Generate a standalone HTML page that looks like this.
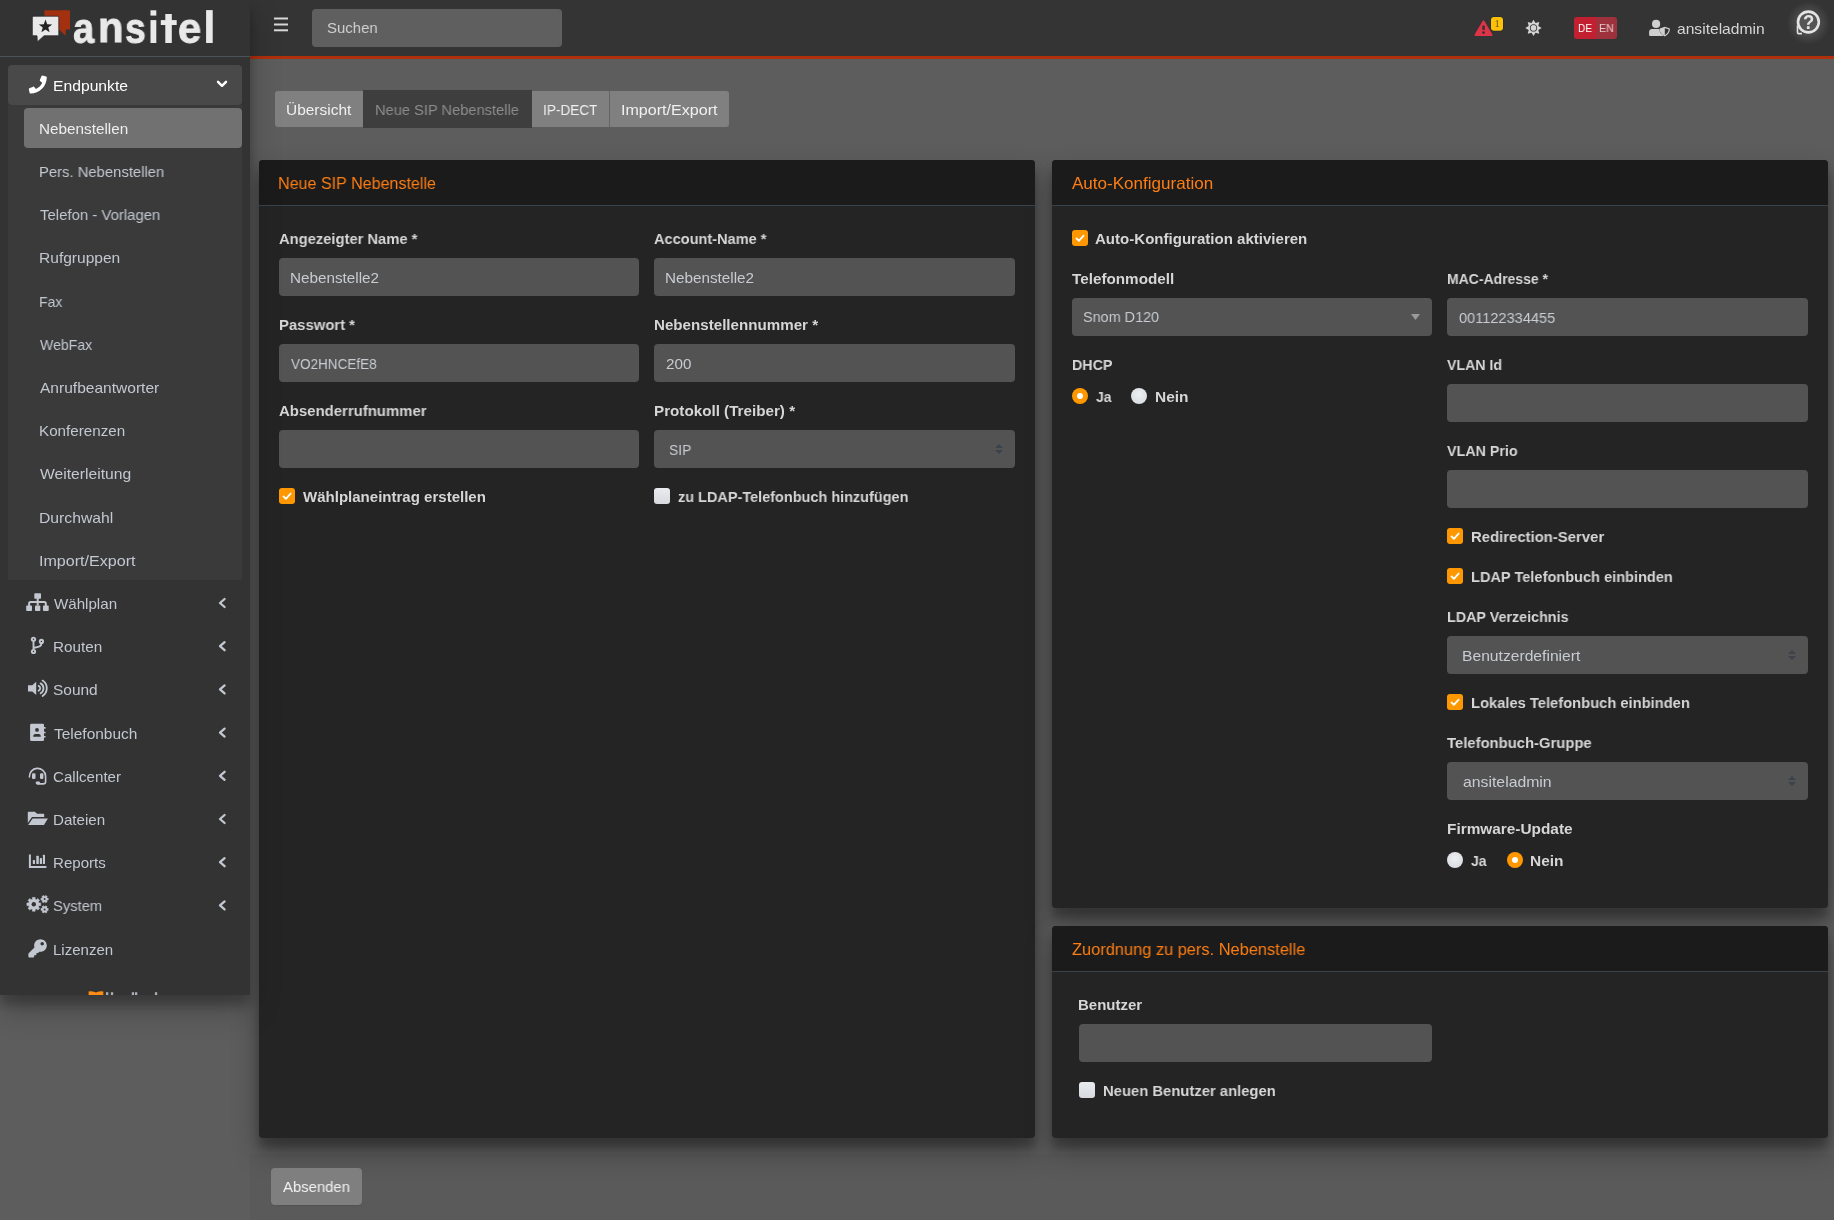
<!DOCTYPE html>
<html><head><meta charset="utf-8"><style>
html,body{margin:0;padding:0;}
body{width:1834px;height:1220px;position:relative;overflow:hidden;background:#5d5d5d;font-family:"Liberation Sans",sans-serif;}
.t{position:absolute;white-space:nowrap;line-height:1;will-change:transform;}
.b{position:absolute;}
</style></head><body>
<div class="b" style="left:250px;top:1154px;width:1584px;height:66px;background:#5a5a5a;"></div>
<div class="b" style="left:259px;top:160px;width:776px;height:978px;background:#242424;border-radius:4px;box-shadow:0 14px 28px rgba(0,0,0,.3),0 10px 10px rgba(0,0,0,.25);"></div>
<div class="b" style="left:1052px;top:160px;width:776px;height:748px;background:#242424;border-radius:4px;box-shadow:0 14px 28px rgba(0,0,0,.3),0 10px 10px rgba(0,0,0,.25);"></div>
<div class="b" style="left:1052px;top:926px;width:776px;height:212px;background:#242424;border-radius:4px;box-shadow:0 14px 28px rgba(0,0,0,.3),0 10px 10px rgba(0,0,0,.25);"></div>
<div class="b" style="left:259px;top:160px;width:776px;height:45px;background:#1b1b1b;border-radius:4px 4px 0 0;"></div>
<div class="b" style="left:259px;top:205px;width:776px;height:1px;background:#39434c;"></div>
<div class="b" style="left:1052px;top:160px;width:776px;height:45px;background:#1b1b1b;border-radius:4px 4px 0 0;"></div>
<div class="b" style="left:1052px;top:205px;width:776px;height:1px;background:#39434c;"></div>
<div class="b" style="left:1052px;top:926px;width:776px;height:45px;background:#1b1b1b;border-radius:4px 4px 0 0;"></div>
<div class="b" style="left:1052px;top:971px;width:776px;height:1px;background:#39434c;"></div>
<div class="t" style="left:277.68px;top:175.03px;font-size:16.5px;color:#fd7e14;transform:scaleX(0.9752);transform-origin:0 0;">Neue SIP Nebenstelle</div>
<div class="t" style="left:1072.00px;top:175.03px;font-size:16.5px;color:#fd7e14;transform:scaleX(1.0328);transform-origin:0 0;">Auto-Konfiguration</div>
<div class="t" style="left:1071.51px;top:941.03px;font-size:16.5px;color:#fd7e14;transform:scaleX(0.9933);transform-origin:0 0;">Zuordnung zu pers. Nebenstelle</div>
<div class="t" style="left:278.62px;top:231.30px;font-size:15px;font-weight:bold;color:#d6d6d6;transform:scaleX(0.9824);transform-origin:0 0;">Angezeigter Name *</div>
<div class="t" style="left:653.62px;top:231.30px;font-size:15px;font-weight:bold;color:#d6d6d6;transform:scaleX(0.9703);transform-origin:0 0;">Account-Name *</div>
<div class="b" style="left:279px;top:258px;width:360px;height:38px;background:#535353;border-radius:4px;"></div>
<div class="b" style="left:654px;top:258px;width:361px;height:38px;background:#535353;border-radius:4px;"></div>
<div class="t" style="left:289.80px;top:270.30px;font-size:15px;color:#c8ccd1;transform:scaleX(1.0167);transform-origin:0 0;">Nebenstelle2</div>
<div class="t" style="left:664.80px;top:270.30px;font-size:15px;color:#c8ccd1;transform:scaleX(1.0167);transform-origin:0 0;">Nebenstelle2</div>
<div class="t" style="left:278.82px;top:317.30px;font-size:15px;font-weight:bold;color:#d6d6d6;transform:scaleX(0.9911);transform-origin:0 0;">Passwort *</div>
<div class="t" style="left:653.82px;top:317.30px;font-size:15px;font-weight:bold;color:#d6d6d6;transform:scaleX(1.0094);transform-origin:0 0;">Nebenstellennummer *</div>
<div class="b" style="left:279px;top:344px;width:360px;height:38px;background:#535353;border-radius:4px;"></div>
<div class="b" style="left:654px;top:344px;width:361px;height:38px;background:#535353;border-radius:4px;"></div>
<div class="t" style="left:290.93px;top:356.30px;font-size:15px;color:#c8ccd1;transform:scaleX(0.9009);transform-origin:0 0;">VO2HNCEfE8</div>
<div class="t" style="left:666.25px;top:356.30px;font-size:15px;color:#c8ccd1;transform:scaleX(1.0127);transform-origin:0 0;">200</div>
<div class="t" style="left:278.62px;top:403.30px;font-size:15px;font-weight:bold;color:#d6d6d6;transform:scaleX(0.9949);transform-origin:0 0;">Absenderrufnummer</div>
<div class="t" style="left:653.82px;top:403.30px;font-size:15px;font-weight:bold;color:#d6d6d6;transform:scaleX(1.0134);transform-origin:0 0;">Protokoll (Treiber) *</div>
<div class="b" style="left:279px;top:430px;width:360px;height:38px;background:#535353;border-radius:4px;"></div>
<div class="b" style="left:654px;top:430px;width:361px;height:38px;background:#535353;border-radius:4px;"></div>
<div class="t" style="left:669.33px;top:442.30px;font-size:15px;color:#c8ccd1;transform:scaleX(0.9241);transform-origin:0 0;">SIP</div>
<svg class="b" style="left:995px;top:444px" width="8" height="10" viewBox="0 0 8 10"><path d="M0 4 L4 0 L8 4Z M0 6 L4 10 L8 6Z" fill="#3b424a"/></svg>
<div class="b" style="left:279px;top:488px;width:16px;height:16px;border-radius:3px;background:#ff9800"><svg width="16" height="16" viewBox="0 0 16 16" style="position:absolute;left:0;top:0"><path d="M4.5 8.4 L6.9 10.8 L11.6 5.6" fill="none" stroke="#fff" stroke-width="1.8" stroke-linecap="round" stroke-linejoin="round"/></svg></div>
<div class="t" style="left:302.50px;top:489.30px;font-size:15px;font-weight:bold;color:#d6d6d6;transform:scaleX(1.0019);transform-origin:0 0;">Wählplaneintrag erstellen</div>
<div class="b" style="left:654px;top:488px;width:16px;height:16px;border-radius:3px;background:linear-gradient(#e9ecef,#d6dadf)"></div>
<div class="t" style="left:678.20px;top:489.30px;font-size:15px;font-weight:bold;color:#d6d6d6;transform:scaleX(0.9647);transform-origin:0 0;">zu LDAP-Telefonbuch hinzufügen</div>
<div class="b" style="left:1072px;top:230px;width:16px;height:16px;border-radius:3px;background:#ff9800"><svg width="16" height="16" viewBox="0 0 16 16" style="position:absolute;left:0;top:0"><path d="M4.5 8.4 L6.9 10.8 L11.6 5.6" fill="none" stroke="#fff" stroke-width="1.8" stroke-linecap="round" stroke-linejoin="round"/></svg></div>
<div class="t" style="left:1095.12px;top:231.30px;font-size:15px;font-weight:bold;color:#d6d6d6;transform:scaleX(1.0030);transform-origin:0 0;">Auto-Konfiguration aktivieren</div>
<div class="t" style="left:1071.85px;top:271.30px;font-size:15px;font-weight:bold;color:#d6d6d6;transform:scaleX(1.0164);transform-origin:0 0;">Telefonmodell</div>
<div class="t" style="left:1446.83px;top:271.30px;font-size:15px;font-weight:bold;color:#d6d6d6;transform:scaleX(0.9317);transform-origin:0 0;">MAC-Adresse *</div>
<div class="b" style="left:1072px;top:298px;width:360px;height:38px;background:#535353;border-radius:4px;"></div>
<div class="b" style="left:1447px;top:298px;width:361px;height:38px;background:#535353;border-radius:4px;"></div>
<div class="t" style="left:1083.33px;top:309.30px;font-size:15px;color:#c8ccd1;transform:scaleX(0.9615);transform-origin:0 0;">Snom D120</div>
<svg class="b" style="left:1411px;top:314px" width="9" height="6" viewBox="0 0 9 6"><path d="M0 0 L9 0 L4.5 6Z" fill="#9a9a9a"/></svg>
<div class="t" style="left:1459.40px;top:310.30px;font-size:15px;color:#c8ccd1;transform:scaleX(0.9714);transform-origin:0 0;">001122334455</div>
<div class="t" style="left:1071.83px;top:357.30px;font-size:15px;font-weight:bold;color:#d6d6d6;transform:scaleX(0.9506);transform-origin:0 0;">DHCP</div>
<div class="t" style="left:1446.92px;top:357.30px;font-size:15px;font-weight:bold;color:#d6d6d6;transform:scaleX(0.9424);transform-origin:0 0;">VLAN Id</div>
<div class="b" style="left:1447px;top:384px;width:361px;height:38px;background:#535353;border-radius:4px;"></div>
<div class="b" style="left:1072px;top:388px;width:16px;height:16px;border-radius:50%;background:#ff9800"><div class="b" style="left:5px;top:5px;width:6px;height:6px;border-radius:50%;background:#fff"></div></div>
<div class="t" style="left:1095.78px;top:389.30px;font-size:15px;font-weight:bold;color:#d6d6d6;transform:scaleX(0.9351);transform-origin:0 0;">Ja</div>
<div class="b" style="left:1131px;top:388px;width:16px;height:16px;border-radius:50%;background:radial-gradient(circle at 50% 40%,#eef0f2,#d3d7dc)"></div>
<div class="t" style="left:1154.53px;top:389.30px;font-size:15px;font-weight:bold;color:#d6d6d6;transform:scaleX(1.0294);transform-origin:0 0;">Nein</div>
<div class="t" style="left:1446.92px;top:443.30px;font-size:15px;font-weight:bold;color:#d6d6d6;transform:scaleX(0.9524);transform-origin:0 0;">VLAN Prio</div>
<div class="b" style="left:1447px;top:470px;width:361px;height:38px;background:#535353;border-radius:4px;"></div>
<div class="b" style="left:1447px;top:528px;width:16px;height:16px;border-radius:3px;background:#ff9800"><svg width="16" height="16" viewBox="0 0 16 16" style="position:absolute;left:0;top:0"><path d="M4.5 8.4 L6.9 10.8 L11.6 5.6" fill="none" stroke="#fff" stroke-width="1.8" stroke-linecap="round" stroke-linejoin="round"/></svg></div>
<div class="t" style="left:1470.53px;top:529.30px;font-size:15px;font-weight:bold;color:#d6d6d6;transform:scaleX(0.9921);transform-origin:0 0;">Redirection-Server</div>
<div class="b" style="left:1447px;top:568px;width:16px;height:16px;border-radius:3px;background:#ff9800"><svg width="16" height="16" viewBox="0 0 16 16" style="position:absolute;left:0;top:0"><path d="M4.5 8.4 L6.9 10.8 L11.6 5.6" fill="none" stroke="#fff" stroke-width="1.8" stroke-linecap="round" stroke-linejoin="round"/></svg></div>
<div class="t" style="left:1470.53px;top:569.30px;font-size:15px;font-weight:bold;color:#d6d6d6;transform:scaleX(0.9715);transform-origin:0 0;">LDAP Telefonbuch einbinden</div>
<div class="t" style="left:1446.83px;top:609.30px;font-size:15px;font-weight:bold;color:#d6d6d6;transform:scaleX(0.9547);transform-origin:0 0;">LDAP Verzeichnis</div>
<div class="b" style="left:1447px;top:636px;width:361px;height:38px;background:#535353;border-radius:4px;"></div>
<div class="t" style="left:1462.20px;top:648.30px;font-size:15px;color:#c8ccd1;transform:scaleX(1.0435);transform-origin:0 0;">Benutzerdefiniert</div>
<svg class="b" style="left:1788px;top:650px" width="8" height="10" viewBox="0 0 8 10"><path d="M0 4 L4 0 L8 4Z M0 6 L4 10 L8 6Z" fill="#3b424a"/></svg>
<div class="b" style="left:1447px;top:694px;width:16px;height:16px;border-radius:3px;background:#ff9800"><svg width="16" height="16" viewBox="0 0 16 16" style="position:absolute;left:0;top:0"><path d="M4.5 8.4 L6.9 10.8 L11.6 5.6" fill="none" stroke="#fff" stroke-width="1.8" stroke-linecap="round" stroke-linejoin="round"/></svg></div>
<div class="t" style="left:1470.53px;top:695.30px;font-size:15px;font-weight:bold;color:#d6d6d6;transform:scaleX(0.9811);transform-origin:0 0;">Lokales Telefonbuch einbinden</div>
<div class="t" style="left:1446.85px;top:735.30px;font-size:15px;font-weight:bold;color:#d6d6d6;transform:scaleX(0.9882);transform-origin:0 0;">Telefonbuch-Gruppe</div>
<div class="b" style="left:1447px;top:762px;width:361px;height:38px;background:#535353;border-radius:4px;"></div>
<div class="t" style="left:1462.80px;top:774.30px;font-size:15px;color:#c8ccd1;transform:scaleX(1.0526);transform-origin:0 0;">ansiteladmin</div>
<svg class="b" style="left:1788px;top:776px" width="8" height="10" viewBox="0 0 8 10"><path d="M0 4 L4 0 L8 4Z M0 6 L4 10 L8 6Z" fill="#3b424a"/></svg>
<div class="t" style="left:1446.83px;top:821.30px;font-size:15px;font-weight:bold;color:#d6d6d6;transform:scaleX(1.0250);transform-origin:0 0;">Firmware-Update</div>
<div class="b" style="left:1447px;top:852px;width:16px;height:16px;border-radius:50%;background:radial-gradient(circle at 50% 40%,#eef0f2,#d3d7dc)"></div>
<div class="t" style="left:1471.28px;top:853.30px;font-size:15px;font-weight:bold;color:#d6d6d6;transform:scaleX(0.9351);transform-origin:0 0;">Ja</div>
<div class="b" style="left:1507px;top:852px;width:16px;height:16px;border-radius:50%;background:#ff9800"><div class="b" style="left:5px;top:5px;width:6px;height:6px;border-radius:50%;background:#fff"></div></div>
<div class="t" style="left:1530.43px;top:853.30px;font-size:15px;font-weight:bold;color:#d6d6d6;transform:scaleX(1.0294);transform-origin:0 0;">Nein</div>
<div class="t" style="left:1078.43px;top:997.30px;font-size:15px;font-weight:bold;color:#d6d6d6;transform:scaleX(1.0000);transform-origin:0 0;">Benutzer</div>
<div class="b" style="left:1079px;top:1024px;width:353px;height:38px;background:#535353;border-radius:4px;"></div>
<div class="b" style="left:1079px;top:1082px;width:16px;height:16px;border-radius:3px;background:linear-gradient(#e9ecef,#d6dadf)"></div>
<div class="t" style="left:1103.23px;top:1083.30px;font-size:15px;font-weight:bold;color:#d6d6d6;transform:scaleX(0.9874);transform-origin:0 0;">Neuen Benutzer anlegen</div>
<div class="b" style="left:271px;top:1168px;width:91px;height:37px;background:#7f7f7f;border-radius:4px;box-shadow:0 1px 1px rgba(0,0,0,.08);"></div>
<div class="t" style="left:283.00px;top:1179.30px;font-size:15px;color:#f2f2f2;transform:scaleX(0.9910);transform-origin:0 0;">Absenden</div>
<div class="b" style="left:275px;top:91px;width:88px;height:36px;background:#808080;border-radius:3px 0 0 3px;"></div>
<div class="b" style="left:363px;top:90px;width:169px;height:38px;background:#3e3e3e;"></div>
<div class="b" style="left:532px;top:91px;width:77px;height:36px;background:#808080;"></div>
<div class="b" style="left:609px;top:91px;width:1px;height:36px;background:#646464;"></div>
<div class="b" style="left:610px;top:91px;width:119px;height:36px;background:#808080;border-radius:0 3px 3px 0;"></div>
<div class="t" style="left:285.88px;top:102.30px;font-size:15px;color:#f0f0f0;transform:scaleX(1.0306);transform-origin:0 0;">Übersicht</div>
<div class="t" style="left:374.80px;top:102.30px;font-size:15px;color:#8c8c8c;transform:scaleX(0.9764);transform-origin:0 0;">Neue SIP Nebenstelle</div>
<div class="t" style="left:542.65px;top:102.30px;font-size:15px;color:#f0f0f0;transform:scaleX(0.9083);transform-origin:0 0;">IP-DECT</div>
<div class="t" style="left:620.65px;top:102.30px;font-size:15px;color:#f0f0f0;transform:scaleX(1.0725);transform-origin:0 0;">Import/Export</div>
<div class="b" style="left:250px;top:0px;width:1584px;height:56px;background:#343434;"></div>
<div class="b" style="left:250px;top:56px;width:1584px;height:3px;background:#b0300b;"></div>
<div class="b" style="left:312px;top:9px;width:250px;height:38px;background:#5f5f5f;border-radius:4px;"></div>
<div class="t" style="left:327.02px;top:20.30px;font-size:15px;color:#d0d0d0;transform:scaleX(0.9959);transform-origin:0 0;">Suchen</div>
<div class="t" style="left:1677.20px;top:21.30px;font-size:15px;color:#d6d6d6;transform:scaleX(1.0405);transform-origin:0 0;">ansiteladmin</div>
<div class="b" style="left:1574px;top:17px;width:22px;height:22px;background:#c21f30;border-radius:3px 0 0 3px;"></div>
<div class="b" style="left:1596px;top:17px;width:21px;height:22px;background:#9d323c;border-radius:0 3px 3px 0;"></div>
<div class="t" style="left:1577.80px;top:22.83px;font-size:11.3px;color:#ffffff;transform:scaleX(0.8954);transform-origin:0 0;">DE</div>
<div class="t" style="left:1598.60px;top:22.83px;font-size:11.3px;color:#e6c9cc;transform:scaleX(0.9464);transform-origin:0 0;">EN</div>
<div class="b" style="left:0px;top:0px;width:250px;height:995px;background:#333333;box-shadow:0 14px 28px rgba(0,0,0,.25),0 10px 10px rgba(0,0,0,.22);"></div>
<div class="b" style="left:0px;top:56px;width:250px;height:1px;background:#4b545c;"></div>
<div class="b" style="left:8px;top:105px;width:234px;height:475px;background:#3a3a3a;"></div>
<div class="b" style="left:8px;top:65px;width:234px;height:40px;background:#494949;border-radius:4px;"></div>
<div class="b" style="left:24px;top:108px;width:218px;height:40px;background:#717171;border-radius:4px;"></div>
<div class="t" style="left:52.80px;top:78.30px;font-size:15px;color:#ffffff;transform:scaleX(1.0455);transform-origin:0 0;">Endpunkte</div>
<div class="t" style="left:39.10px;top:121.30px;font-size:15px;color:#eeeeee;transform:scaleX(1.0193);transform-origin:0 0;">Nebenstellen</div>
<div class="t" style="left:39.10px;top:164.30px;font-size:15px;color:#c2c7d0;transform:scaleX(0.9874);transform-origin:0 0;">Pers. Nebenstellen</div>
<div class="t" style="left:40.00px;top:207.30px;font-size:15px;color:#c2c7d0;transform:scaleX(0.9948);transform-origin:0 0;">Telefon - Vorlagen</div>
<div class="t" style="left:39.10px;top:250.30px;font-size:15px;color:#c2c7d0;transform:scaleX(1.0367);transform-origin:0 0;">Rufgruppen</div>
<div class="t" style="left:39.10px;top:294.30px;font-size:15px;color:#c2c7d0;transform:scaleX(0.9312);transform-origin:0 0;">Fax</div>
<div class="t" style="left:40.22px;top:337.30px;font-size:15px;color:#c2c7d0;transform:scaleX(0.9395);transform-origin:0 0;">WebFax</div>
<div class="t" style="left:40.30px;top:380.30px;font-size:15px;color:#c2c7d0;transform:scaleX(1.0364);transform-origin:0 0;">Anrufbeantworter</div>
<div class="t" style="left:39.10px;top:423.30px;font-size:15px;color:#c2c7d0;transform:scaleX(1.0136);transform-origin:0 0;">Konferenzen</div>
<div class="t" style="left:40.22px;top:466.30px;font-size:15px;color:#c2c7d0;transform:scaleX(1.0444);transform-origin:0 0;">Weiterleitung</div>
<div class="t" style="left:39.10px;top:510.30px;font-size:15px;color:#c2c7d0;transform:scaleX(1.0492);transform-origin:0 0;">Durchwahl</div>
<div class="t" style="left:38.95px;top:553.30px;font-size:15px;color:#c2c7d0;transform:scaleX(1.0725);transform-origin:0 0;">Import/Export</div>
<div class="t" style="left:53.92px;top:596.30px;font-size:15px;color:#c2c7d0;transform:scaleX(1.0081);transform-origin:0 0;">Wählplan</div>
<div class="t" style="left:52.80px;top:639.30px;font-size:15px;color:#c2c7d0;transform:scaleX(1.0173);transform-origin:0 0;">Routen</div>
<div class="t" style="left:53.33px;top:682.30px;font-size:15px;color:#c2c7d0;transform:scaleX(1.0312);transform-origin:0 0;">Sound</div>
<div class="t" style="left:53.70px;top:726.30px;font-size:15px;color:#c2c7d0;transform:scaleX(1.0305);transform-origin:0 0;">Telefonbuch</div>
<div class="t" style="left:53.25px;top:769.30px;font-size:15px;color:#c2c7d0;transform:scaleX(1.0071);transform-origin:0 0;">Callcenter</div>
<div class="t" style="left:52.80px;top:812.30px;font-size:15px;color:#c2c7d0;transform:scaleX(1.0101);transform-origin:0 0;">Dateien</div>
<div class="t" style="left:52.80px;top:855.30px;font-size:15px;color:#c2c7d0;transform:scaleX(1.0044);transform-origin:0 0;">Reports</div>
<div class="t" style="left:53.33px;top:898.30px;font-size:15px;color:#c2c7d0;transform:scaleX(0.9819);transform-origin:0 0;">System</div>
<div class="t" style="left:52.80px;top:942.30px;font-size:15px;color:#c2c7d0;transform:scaleX(1.0030);transform-origin:0 0;">Lizenzen</div>
<div class="t" style="left:72.56px;top:6.79px;font-size:42.73px;font-weight:bold;color:#e9e9e9;transform:scaleX(0.8924);transform-origin:0 0;-webkit-text-stroke:0.9px #e9e9e9;">a</div>
<div class="t" style="left:98.19px;top:6.89px;font-size:42.41px;font-weight:bold;color:#e9e9e9;transform:scaleX(0.9821);transform-origin:0 0;-webkit-text-stroke:0.9px #e9e9e9;">n</div>
<div class="t" style="left:125.49px;top:6.79px;font-size:42.73px;font-weight:bold;color:#e9e9e9;transform:scaleX(0.8777);transform-origin:0 0;-webkit-text-stroke:0.9px #e9e9e9;">s</div>
<div class="t" style="left:178.33px;top:6.79px;font-size:42.73px;font-weight:bold;color:#e9e9e9;transform:scaleX(0.9752);transform-origin:0 0;-webkit-text-stroke:0.9px #e9e9e9;">e</div>
<svg class="b" style="left:0;top:0" width="1834" height="1220" viewBox="0 0 1834 1220"><rect x="274" y="17.5" width="14" height="2" fill="#d8d8d8"/>
<rect x="274" y="23.5" width="14" height="2" fill="#d8d8d8"/>
<rect x="274" y="29.3" width="14" height="2" fill="#d8d8d8"/>
<path d="M44.4 10.3 H69 Q70 10.3 70 11.3 V29.6 H65.7 V35.7 L59.5 29.9 H44.4 Z" fill="#a3300f"/>
<path d="M33.8 16.2 H57.3 Q58.8 16.2 58.8 17.7 V34.3 Q58.8 35.8 57.3 35.8 H44.1 L37.3 41.9 L37 35.8 H33.8 Q32.3 35.8 32.3 34.3 V17.7 Q32.3 16.2 33.8 16.2Z" fill="#e9e9e9" stroke="#2a2a2a" stroke-width="0.8"/>
<path d="M45.50 19.60 L47.20 24.25 L52.16 24.44 L48.26 27.50 L49.61 32.26 L45.50 29.50 L41.39 32.26 L42.74 27.50 L38.84 24.44 L43.80 24.25Z" fill="#232323"/>
<rect x="150.5" y="20.1" width="5.8" height="22.9" fill="#e9e9e9"/><rect x="150.5" y="10.3" width="5.8" height="5.3" fill="#e9e9e9"/>
<rect x="165.3" y="14" width="6.5" height="29" fill="#e9e9e9"/><rect x="160.8" y="20.1" width="15.9" height="4.9" fill="#e9e9e9"/>
<rect x="206.1" y="10.1" width="6.6" height="32.9" fill="#e9e9e9"/>
<g transform="translate(28.8 75.6) scale(0.03516)"><path d="M493.4 24.6l-104-24c-11.3-2.6-22.9 3.3-27.5 13.9l-48 112c-4.2 9.8-1.4 21.3 6.9 28l60.6 49.6c-36 76.7-98.9 140.5-177.2 177.2l-49.6-60.6c-6.8-8.3-18.2-11.1-28-6.9l-112 48C3.9 366.5-2 378.1.6 389.4l24 104C27.1 504.2 36.7 512 48 512c256.1 0 464-207.5 464-464 0-11.2-7.7-20.9-18.6-23.4z" fill="#ffffff"/></g>
<path d="M218 81.8 L222 85.8 L226 81.8" fill="none" stroke="#ffffff" stroke-width="2.4" stroke-linecap="round" stroke-linejoin="round"/>
<path d="M224.6 599.0 L220 603.0 L224.6 607.0" fill="none" stroke="#c2c7d0" stroke-width="2.3" stroke-linecap="round" stroke-linejoin="round"/>
<path d="M224.6 642.2 L220 646.2 L224.6 650.2" fill="none" stroke="#c2c7d0" stroke-width="2.3" stroke-linecap="round" stroke-linejoin="round"/>
<path d="M224.6 685.4 L220 689.4 L224.6 693.4" fill="none" stroke="#c2c7d0" stroke-width="2.3" stroke-linecap="round" stroke-linejoin="round"/>
<path d="M224.6 728.6 L220 732.6 L224.6 736.6" fill="none" stroke="#c2c7d0" stroke-width="2.3" stroke-linecap="round" stroke-linejoin="round"/>
<path d="M224.6 771.8 L220 775.8 L224.6 779.8" fill="none" stroke="#c2c7d0" stroke-width="2.3" stroke-linecap="round" stroke-linejoin="round"/>
<path d="M224.6 815.0 L220 819.0 L224.6 823.0" fill="none" stroke="#c2c7d0" stroke-width="2.3" stroke-linecap="round" stroke-linejoin="round"/>
<path d="M224.6 858.2 L220 862.2 L224.6 866.2" fill="none" stroke="#c2c7d0" stroke-width="2.3" stroke-linecap="round" stroke-linejoin="round"/>
<path d="M224.6 901.4 L220 905.4 L224.6 909.4" fill="none" stroke="#c2c7d0" stroke-width="2.3" stroke-linecap="round" stroke-linejoin="round"/>
<g fill="#c2c7d0"><rect x="34.3" y="593.3" width="6.7" height="5.5" rx="0.8"/><rect x="36.7" y="598" width="2" height="7.5"/><rect x="26.2" y="605.4" width="5.8" height="5.6" rx="0.8"/><rect x="35" y="605.4" width="5.3" height="5.6" rx="0.8"/><rect x="43" y="605.4" width="5.7" height="5.6" rx="0.8"/></g><path d="M29.1 606 V603.6 Q29.1 602.1 30.6 602.1 H44.3 Q45.8 602.1 45.8 603.6 V606" fill="none" stroke="#c2c7d0" stroke-width="2"/>
<g fill="none" stroke="#c2c7d0" stroke-width="1.9"><path d="M33.5 641.5 V649.5"/><path d="M41.4 643.6 Q41.4 647.3 34 647.7"/></g><g fill="#c2c7d0"><circle cx="33.5" cy="639.3" r="2.6"/><circle cx="41.4" cy="641.4" r="2.6"/><circle cx="33.5" cy="651.5" r="2.6"/></g><g fill="#333"><circle cx="33.5" cy="639.3" r="0.7"/><circle cx="41.4" cy="641.4" r="0.7"/><circle cx="33.5" cy="651.5" r="0.7"/></g>
<path d="M28 685.2 H32.3 L36.2 681.8 V695 L32.3 691.5 H28Z" fill="#c2c7d0"/><g fill="none" stroke="#c2c7d0" stroke-width="1.8" stroke-linecap="round"><path d="M38.6 685.9 A2.6 2.6 0 0 1 38.6 690.7"/><path d="M40.6 683.4 A5.6 5.6 0 0 1 40.6 693.2"/><path d="M42.6 680.6 A9.2 9.2 0 0 1 42.6 696"/></g>
<rect x="30.1" y="723.7" width="13.9" height="17.3" rx="1.3" fill="#c2c7d0"/><g fill="#c2c7d0"><rect x="43.5" y="727.1" width="2.1" height="1.6" rx="0.5"/><rect x="43.5" y="731.7" width="2.1" height="1.6" rx="0.5"/><rect x="43.5" y="736" width="2.1" height="1.6" rx="0.5"/></g><circle cx="37" cy="729.9" r="1.9" fill="#333"/><path d="M33.2 736.7 Q33.2 734 35.5 734 H38.5 Q40.8 734 40.8 736.7Z" fill="#333"/>
<path d="M29.4 777 A8.1 8.1 0 0 1 45.6 776 V781.5 Q45.6 783.9 43.2 783.9 H37.5" fill="none" stroke="#c2c7d0" stroke-width="1.6" stroke-linecap="round"/><g fill="#c2c7d0"><rect x="32" y="773.2" width="3.5" height="5.7" rx="1.2"/><rect x="40" y="773.2" width="3.4" height="5.7" rx="1.2"/><rect x="35.7" y="781.6" width="4.3" height="2.7" rx="1.2"/></g>
<path d="M28.6 811.7 H34.8 L37.1 813.8 H43.4 Q44.2 813.8 44.2 814.6 V817 H32 L27.8 823 V812.5 Q27.8 811.7 28.6 811.7Z" fill="#c2c7d0"/><path d="M32.6 818.4 H47.9 L44 824.9 H28.1Z" fill="#c2c7d0"/>
<g fill="#c2c7d0"><path d="M28.9 854.6 H30.9 V866 H46.4 V867.9 H28.9Z"/><rect x="32.8" y="860" width="2.2" height="3.9" rx="0.5"/><rect x="36.3" y="855.8" width="2.5" height="8.1" rx="0.5"/><rect x="39.8" y="858" width="2.2" height="5.9" rx="0.5"/><rect x="42.9" y="854.7" width="2.1" height="9.2" rx="0.5"/></g>
<path d="M38.70 902.27 L38.97 903.11 L40.67 902.93 L40.67 905.67 L38.97 905.49 L38.70 906.33 L38.29 907.11 L39.62 908.19 L37.69 910.12 L36.61 908.79 L35.83 909.20 L34.99 909.47 L35.17 911.17 L32.43 911.17 L32.61 909.47 L31.77 909.20 L30.99 908.79 L29.91 910.12 L27.98 908.19 L29.31 907.11 L28.90 906.33 L28.63 905.49 L26.93 905.67 L26.93 902.93 L28.63 903.11 L28.90 902.27 L29.31 901.49 L27.98 900.41 L29.91 898.48 L30.99 899.81 L31.77 899.40 L32.61 899.13 L32.43 897.43 L35.17 897.43 L34.99 899.13 L35.83 899.40 L36.61 899.81 L37.69 898.48 L39.62 900.41 L38.29 901.49Z" fill="#c2c7d0" stroke="#c2c7d0" stroke-width="0.6" stroke-linejoin="round"/><circle cx="33.8" cy="904.3" r="2.2" fill="#333333"/>
<path d="M46.94 897.75 L47.18 898.30 L48.17 898.14 L48.17 900.06 L47.18 899.90 L46.94 900.45 L46.58 900.93 L47.22 901.72 L45.56 902.67 L45.20 901.73 L44.60 901.80 L44.00 901.73 L43.64 902.67 L41.98 901.72 L42.62 900.93 L42.26 900.45 L42.02 899.90 L41.03 900.06 L41.03 898.14 L42.02 898.30 L42.26 897.75 L42.62 897.27 L41.98 896.48 L43.64 895.53 L44.00 896.47 L44.60 896.40 L45.20 896.47 L45.56 895.53 L47.22 896.48 L46.58 897.27Z" fill="#c2c7d0" stroke="#c2c7d0" stroke-width="0.6" stroke-linejoin="round"/><circle cx="44.6" cy="899.1" r="1.0" fill="#333333"/>
<path d="M46.94 908.05 L47.18 908.60 L48.17 908.44 L48.17 910.36 L47.18 910.20 L46.94 910.75 L46.58 911.23 L47.22 912.02 L45.56 912.97 L45.20 912.03 L44.60 912.10 L44.00 912.03 L43.64 912.97 L41.98 912.02 L42.62 911.23 L42.26 910.75 L42.02 910.20 L41.03 910.36 L41.03 908.44 L42.02 908.60 L42.26 908.05 L42.62 907.57 L41.98 906.78 L43.64 905.83 L44.00 906.77 L44.60 906.70 L45.20 906.77 L45.56 905.83 L47.22 906.78 L46.58 907.57Z" fill="#c2c7d0" stroke="#c2c7d0" stroke-width="0.6" stroke-linejoin="round"/><circle cx="44.6" cy="909.4" r="1.0" fill="#333333"/>
<g transform="translate(28.4 939.2) scale(0.03594)"><path d="M512 176.001C512 273.203 433.202 352 336 352c-11.22 0-22.19-1.062-32.827-3.069l-24.012 27.014A23.999 23.999 0 0 1 261.223 384H224v40c0 13.255-10.745 24-24 24h-40v40c0 13.255-10.745 24-24 24H24c-13.255 0-24-10.745-24-24v-78.059c0-6.365 2.529-12.47 7.029-16.971l161.802-161.802C163.108 213.814 160 195.271 160 176 160 78.798 238.797.001 335.999 0 433.488-.001 512 78.511 512 176.001zM336 128c0 26.51 21.49 48 48 48s48-21.49 48-48-21.49-48-48-48-48 21.49-48 48z" fill="#c2c7d0"/></g>
<path d="M88.6 991.4 Q92 990.9 95.9 992.6 Q99.8 990.9 103.3 991.4 V995 H88.6Z" fill="#fd8c12"/>
<rect x="106" y="992.2" width="2.3" height="2.8" fill="#a9adb4"/>
<rect x="110.9" y="992.2" width="2.3" height="2.8" fill="#a9adb4"/>
<rect x="131.8" y="992.2" width="2.3" height="2.8" fill="#a9adb4"/>
<rect x="135" y="992.2" width="2.3" height="2.8" fill="#a9adb4"/>
<rect x="154.9" y="992.2" width="2.3" height="2.8" fill="#a9adb4"/>
<path d="M1483.5 20.2 Q1484 20.2 1484.4 21 L1492.4 34.6 Q1492.9 35.9 1491.6 35.9 H1475.4 Q1474.1 35.9 1474.6 34.6 L1482.6 21 Q1483 20.2 1483.5 20.2Z" fill="#df3448"/>
<rect x="1482.3" y="25.5" width="2.5" height="4.5" rx="0.6" fill="#333"/><circle cx="1483.5" cy="32.6" r="1.4" fill="#333"/>
<rect x="1490.5" y="16.5" width="13" height="14.8" rx="3.5" fill="#1f2933"/><rect x="1491" y="17" width="12" height="13.8" rx="3" fill="#ffc107"/>
<text x="1497" y="26.8" font-family="Liberation Serif" font-size="9.5" fill="#554a20" text-anchor="middle">1</text>
<path d="M1533.50 19.70 L1535.49 23.10 L1539.30 22.10 L1538.30 25.91 L1541.70 27.90 L1538.30 29.89 L1539.30 33.70 L1535.49 32.70 L1533.50 36.10 L1531.51 32.70 L1527.70 33.70 L1528.70 29.89 L1525.30 27.90 L1528.70 25.91 L1527.70 22.10 L1531.51 23.10Z" fill="#d4d4d4"/>
<circle cx="1533.5" cy="27.9" r="3.6" fill="#333"/><circle cx="1533.5" cy="27.9" r="2.8" fill="#d4d4d4"/>
<circle cx="1656.1" cy="23.9" r="4.1" fill="#cfcfcf"/>
<path d="M1652.3 29 H1660.5 Q1662 29 1662.6 30.3 L1664 36 H1650.1 Q1649.1 36 1649.1 35 V32.2 Q1649.1 29 1652.3 29Z" fill="#cfcfcf"/>
<path d="M1664.8 26.6 L1670.2 28.4 Q1670.4 33.5 1664.8 36.6 Q1659.2 33.5 1659.4 28.4Z" fill="#333"/>
<path d="M1664.8 27.4 L1669.3 28.9 Q1669.4 33 1664.8 35.7 Q1660.2 33 1660.3 28.9Z" fill="none" stroke="#cfcfcf" stroke-width="1.2"/>
<path d="M1664.8 27.4 L1660.3 28.9 Q1660.2 33 1664.8 35.7Z" fill="#cfcfcf"/>
<defs><radialGradient id="gl"><stop offset="0.45" stop-color="#ffffff" stop-opacity="0.13"/><stop offset="1" stop-color="#ffffff" stop-opacity="0"/></radialGradient></defs>
<circle cx="1808.4" cy="23" r="22" fill="url(#gl)"/>
<path d="M1797.5 25.5 V32.5 Q1797.5 33.6 1798.6 33.6 H1802" fill="none" stroke="#e0e0e0" stroke-width="1.6"/>
<circle cx="1808.4" cy="22" r="10.4" fill="#555" stroke="#e4e4e4" stroke-width="2.6"/>
<text x="1808.7" y="28.8" font-family="Liberation Sans" font-weight="bold" font-size="19.4" fill="#e4e4e4" text-anchor="middle" transform="translate(1808.7 0) scale(0.95 1) translate(-1808.7 0)">?</text></svg>
</body></html>
